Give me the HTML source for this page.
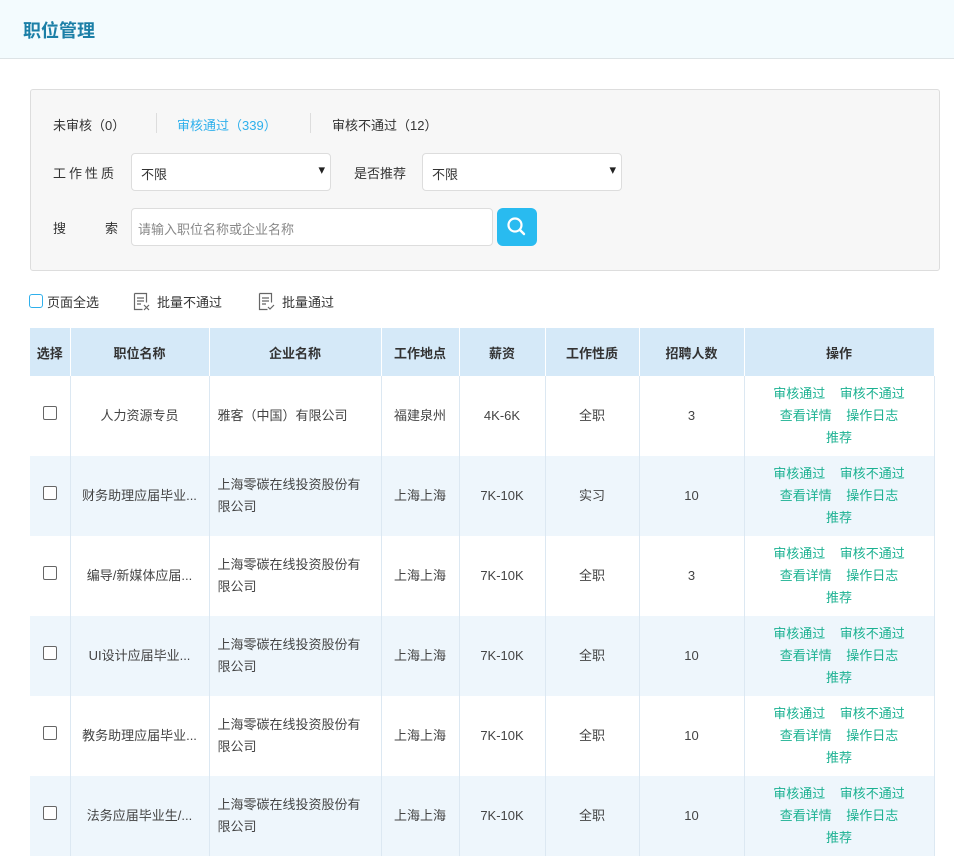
<!DOCTYPE html>
<html><head><meta charset="utf-8"><style>
*{box-sizing:border-box;margin:0;padding:0}
body{width:954px;height:853px;overflow:hidden;background:#fff;font-family:"Liberation Sans","Noto Sans CJK SC",sans-serif;font-size:13px;color:#333;position:relative}
.hd{position:absolute;left:0;top:0;width:954px;height:59px;background:#f3fbfe;border-bottom:1px solid #dde3e6}
.hd h1{position:absolute;left:23px;top:17px;font-size:18px;color:#1b7fa7;font-weight:bold}
.box{position:absolute;left:30px;top:89px;width:910px;height:182px;background:#f7f7f7;border:1px solid #ddd;border-radius:3px}
.t{position:absolute;font-size:13px;color:#333;white-space:nowrap}
.sep{position:absolute;top:23px;width:1px;height:20px;background:#ddd}
.sel,.inp{position:absolute;height:38px;background:#fff;border:1px solid #ddd;border-radius:4px;padding:10px 9px;font-size:13px}
.sel:after{content:"▾";position:absolute;right:5px;top:8px;font-size:13px;color:#222}
.btn{position:absolute;left:466px;top:118px;width:40px;height:38px;background:#29bbf0;border-radius:6px}
table{position:absolute;left:30px;top:328px;width:904px;border-collapse:collapse;table-layout:fixed}
th{height:48px;background:#d5e9f8;font-weight:bold;font-size:13px;color:#333;border-right:1px solid #fff}
td{height:80px;text-align:center;border-right:1px solid #dce8f2;font-size:13px;color:#444;line-height:22px}
tr:nth-child(odd) td{background:#eef6fc}
td.l{text-align:left;padding-left:8px}
td.op{color:#1bb191;line-height:22px}
.cb{display:inline-block;width:14px;height:14px;border:1px solid #666;border-radius:2px;background:#fff}
</style></head><body>
<div class="hd"><h1>职位管理</h1></div>
<div class="box">
<div class="t" style="left:22px;top:25px">未审核（0）</div>
<div class="sep" style="left:125px"></div>
<div class="t" style="left:146px;top:25px;color:#2fb0ec">审核通过（339）</div>
<div class="sep" style="left:279px"></div>
<div class="t" style="left:301px;top:25px">审核不通过（12）</div>
<div class="t" style="left:22px;top:73px;letter-spacing:3px">工作性质</div>
<div class="sel" style="left:100px;top:63px;width:200px">不限</div>
<div class="t" style="left:323px;top:73px">是否推荐</div>
<div class="sel" style="left:391px;top:63px;width:200px">不限</div>
<div class="t" style="left:22px;top:128px">搜</div>
<div class="t" style="left:74px;top:128px">索</div>
<div class="inp" style="left:100px;top:118px;width:362px;color:#888;padding-left:6px">请输入职位名称或企业名称</div>
<div class="btn"><svg width="40" height="38"><circle cx="18" cy="17" r="6.5" fill="none" stroke="#fff" stroke-width="2.2"/><line x1="23" y1="22" x2="27" y2="26" stroke="#fff" stroke-width="2.4" stroke-linecap="round"/></svg></div>
</div>
<div style="position:absolute;left:29px;top:294px;width:14px;height:14px;border:1.5px solid #2fb0ec;border-radius:3px"></div>
<div class="t" style="left:47px;top:292px">页面全选</div>
<svg style="position:absolute;left:133px;top:292px" width="18" height="20"><path d="M1.5 1.5h12v9M1.5 1.5v16h8M4 6h7M4 9h7M4 12h4" fill="none" stroke="#666" stroke-width="1.2"/><path d="M11 13l5 5M16 13l-5 5" stroke="#666" stroke-width="1.2"/></svg>
<div class="t" style="left:157px;top:292px">批量不通过</div>
<svg style="position:absolute;left:258px;top:292px" width="18" height="20"><path d="M1.5 1.5h12v9M1.5 1.5v16h8M4 6h7M4 9h7M4 12h4" fill="none" stroke="#666" stroke-width="1.2"/><path d="M10 15l2 2 4-4" fill="none" stroke="#666" stroke-width="1.2"/></svg>
<div class="t" style="left:282px;top:292px">批量通过</div>
<table>
<colgroup><col style="width:40px"><col style="width:139px"><col style="width:172px"><col style="width:78px"><col style="width:86px"><col style="width:94px"><col style="width:105px"><col style="width:190px"></colgroup>
<tr><th>选择</th><th>职位名称</th><th>企业名称</th><th>工作地点</th><th>薪资</th><th>工作性质</th><th>招聘人数</th><th>操作</th></tr>
<tr><td style="background:#fff"><span class="cb"></span></td><td style="background:#fff">人力资源专员</td><td class="l" style="background:#fff">雅客（中国）有限公司</td><td style="background:#fff">福建泉州</td><td style="background:#fff">4K-6K</td><td style="background:#fff">全职</td><td style="background:#fff">3</td><td class="op" style="background:#fff">审核通过&nbsp;&nbsp;&nbsp;&nbsp;审核不通过<br>查看详情&nbsp;&nbsp;&nbsp;&nbsp;操作日志<br>推荐</td></tr>
<tr><td><span class="cb"></span></td><td>财务助理应届毕业...</td><td class="l">上海零碳在线投资股份有<br>限公司</td><td>上海上海</td><td>7K-10K</td><td>实习</td><td>10</td><td class="op">审核通过&nbsp;&nbsp;&nbsp;&nbsp;审核不通过<br>查看详情&nbsp;&nbsp;&nbsp;&nbsp;操作日志<br>推荐</td></tr>
<tr><td style="background:#fff"><span class="cb"></span></td><td style="background:#fff">编导/新媒体应届...</td><td class="l" style="background:#fff">上海零碳在线投资股份有<br>限公司</td><td style="background:#fff">上海上海</td><td style="background:#fff">7K-10K</td><td style="background:#fff">全职</td><td style="background:#fff">3</td><td class="op" style="background:#fff">审核通过&nbsp;&nbsp;&nbsp;&nbsp;审核不通过<br>查看详情&nbsp;&nbsp;&nbsp;&nbsp;操作日志<br>推荐</td></tr>
<tr><td><span class="cb"></span></td><td>UI设计应届毕业...</td><td class="l">上海零碳在线投资股份有<br>限公司</td><td>上海上海</td><td>7K-10K</td><td>全职</td><td>10</td><td class="op">审核通过&nbsp;&nbsp;&nbsp;&nbsp;审核不通过<br>查看详情&nbsp;&nbsp;&nbsp;&nbsp;操作日志<br>推荐</td></tr>
<tr><td style="background:#fff"><span class="cb"></span></td><td style="background:#fff">教务助理应届毕业...</td><td class="l" style="background:#fff">上海零碳在线投资股份有<br>限公司</td><td style="background:#fff">上海上海</td><td style="background:#fff">7K-10K</td><td style="background:#fff">全职</td><td style="background:#fff">10</td><td class="op" style="background:#fff">审核通过&nbsp;&nbsp;&nbsp;&nbsp;审核不通过<br>查看详情&nbsp;&nbsp;&nbsp;&nbsp;操作日志<br>推荐</td></tr>
<tr><td><span class="cb"></span></td><td>法务应届毕业生/...</td><td class="l">上海零碳在线投资股份有<br>限公司</td><td>上海上海</td><td>7K-10K</td><td>全职</td><td>10</td><td class="op">审核通过&nbsp;&nbsp;&nbsp;&nbsp;审核不通过<br>查看详情&nbsp;&nbsp;&nbsp;&nbsp;操作日志<br>推荐</td></tr>
</table>
</body></html>
